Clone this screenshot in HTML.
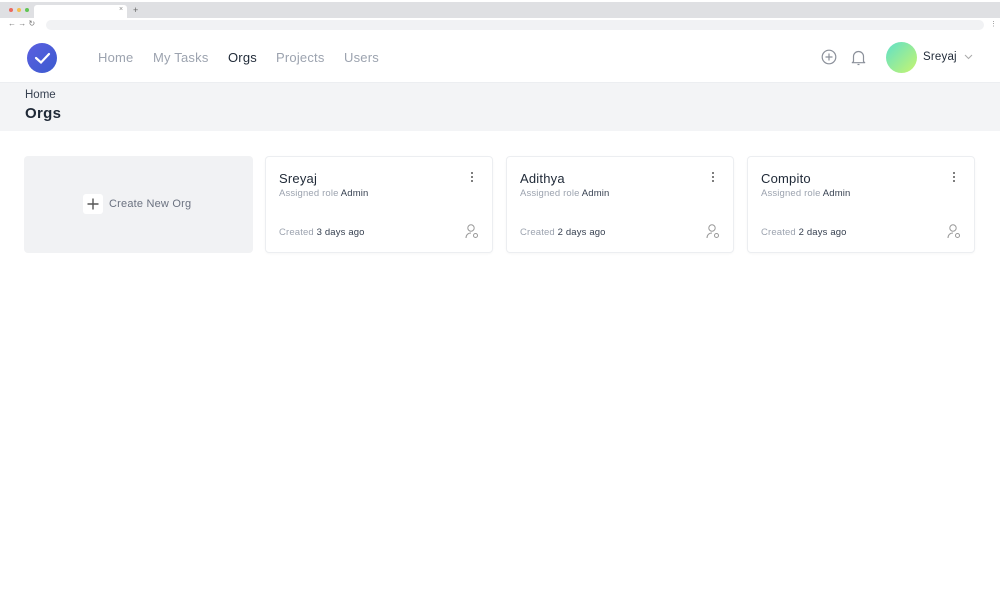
<!DOCTYPE html>
<html><head><style>
*{box-sizing:border-box;margin:0;padding:0}
body{width:1000px;height:610px;background:#fff;font-family:"Liberation Sans",sans-serif;position:relative;overflow:hidden}
.a{position:absolute}
.nav{font-size:13px;color:#9ca3af;top:50px;letter-spacing:.2px}
.card{position:absolute;top:156px;width:228px;height:97px;border:1px solid #eceef1;border-radius:4px;background:#fff;box-shadow:0 1px 2px rgba(0,0,0,.03)}
.card .t{position:absolute;left:13px;top:14px;font-size:13px;color:#1f2937;letter-spacing:.2px}
.card .r{position:absolute;left:13px;top:31px;font-size:9.5px;color:#9ca3af;letter-spacing:.15px}
.card .c{position:absolute;left:13px;top:70px;font-size:9.5px;color:#9ca3af;letter-spacing:.15px}
.card b{font-weight:normal;color:#374151}
.dots{position:absolute;right:18px;top:15px;width:3px}
.dots i{display:block;width:2px;height:2px;background:#555;border-radius:50%;margin-bottom:2px}
.usr{position:absolute;right:13px;top:67px}
</style></head><body>
<div class="a" style="left:0;top:2px;width:1000px;height:16px;background:#dfe0e3"></div>
<div class="a" style="left:9px;top:8px;width:4px;height:4px;border-radius:50%;background:#ec6a5e"></div>
<div class="a" style="left:17px;top:8px;width:4px;height:4px;border-radius:50%;background:#f4bf4f"></div>
<div class="a" style="left:25px;top:8px;width:4px;height:4px;border-radius:50%;background:#61c554"></div>
<div class="a" style="left:34px;top:5px;width:93px;height:13px;background:#fff;border-radius:3px 3px 0 0"></div>
<div class="a" style="left:119px;top:6px;font-size:7px;color:#888">×</div>
<div class="a" style="left:133px;top:5px;font-size:9px;color:#666">+</div>
<div class="a" style="left:0;top:18px;width:1000px;height:14px;background:#fff"></div>
<div class="a" style="left:8px;top:19px;font-size:8px;color:#777">← → ↻</div>
<div class="a" style="left:46px;top:20px;width:938px;height:10px;background:#f1f2f4;border-radius:5px"></div>
<div class="a" style="left:990px;top:20px;font-size:7px;color:#888">⋮</div>

<div class="a" style="left:27px;top:43px;width:30px;height:30px;border-radius:50%;background:linear-gradient(135deg,#5b5fe0,#3b5bcf)"></div>
<svg class="a" style="left:27px;top:43px" width="30" height="30"><path d="M9 15 L14 19.5 L22 11" fill="none" stroke="#fff" stroke-width="2.2" stroke-linecap="round"/></svg>
<div class="a nav" style="left:98px">Home</div>
<div class="a nav" style="left:153px">My Tasks</div>
<div class="a nav" style="left:228px;color:#1f2937">Orgs</div>
<div class="a nav" style="left:276px">Projects</div>
<div class="a nav" style="left:344px">Users</div>
<svg class="a" style="left:821px;top:49px" width="16" height="16"><circle cx="8" cy="8" r="6.8" fill="none" stroke="#8b909a" stroke-width="1.2"/><path d="M8 4.5v7M4.5 8h7" stroke="#8b909a" stroke-width="1.2"/></svg>
<svg class="a" style="left:850px;top:48px" width="17" height="19"><path d="M3.5 13.5V8.5a5 5 0 0 1 10 0v5l1.2 1.2H2.3z" fill="none" stroke="#8b909a" stroke-width="1.2" stroke-linejoin="round"/><path d="M7.5 16.5h2" stroke="#8b909a" stroke-width="1.2"/></svg>
<div class="a" style="left:886px;top:42px;width:31px;height:31px;border-radius:50%;background:linear-gradient(135deg,#5fe0c9,#c8f56e)"></div>
<div class="a" style="left:923px;top:51px;font-size:11.5px;color:#1f2937;letter-spacing:.2px">Sreyaj</div>
<svg class="a" style="left:964px;top:54px" width="9" height="6"><path d="M1 1l3.5 3.5L8 1" fill="none" stroke="#aaa" stroke-width="1"/></svg>

<div class="a" style="left:0;top:82px;width:1000px;height:49px;background:#f3f4f6;border-top:1px solid #eceef1"></div>
<div class="a" style="left:25px;top:89px;font-size:11.5px;color:#374151">Home</div>
<div class="a" style="left:25px;top:105px;font-size:15px;font-weight:bold;color:#1f2937;letter-spacing:.3px">Orgs</div>

<div class="a" style="left:24px;top:156px;width:229px;height:97px;background:#f1f2f4;border-radius:4px"></div>
<div class="a" style="left:83px;top:194px;width:20px;height:20px;background:#fff;border-radius:3px"></div>
<svg class="a" style="left:83px;top:194px" width="20" height="20"><path d="M10 4.5v11M4.5 10h11" stroke="#555" stroke-width="1.4"/></svg>
<div class="a" style="left:109px;top:198px;font-size:11px;color:#6b7280;letter-spacing:.2px">Create New Org</div>

<div class="card" style="left:265px"><div class="t">Sreyaj</div><div class="r">Assigned role <b>Admin</b></div><div class="c">Created <b>3 days ago</b></div><div class="dots"><i></i><i></i><i></i></div><svg class="usr" width="14" height="15"><circle cx="6" cy="4" r="3.2" fill="none" stroke="#999" stroke-width="1"/><path d="M1 14c0-3 2-5 5-5" fill="none" stroke="#999" stroke-width="1"/><circle cx="10.5" cy="11.5" r="2" fill="none" stroke="#999" stroke-width="1"/></svg></div>
<div class="card" style="left:506px"><div class="t">Adithya</div><div class="r">Assigned role <b>Admin</b></div><div class="c">Created <b>2 days ago</b></div><div class="dots"><i></i><i></i><i></i></div><svg class="usr" width="14" height="15"><circle cx="6" cy="4" r="3.2" fill="none" stroke="#999" stroke-width="1"/><path d="M1 14c0-3 2-5 5-5" fill="none" stroke="#999" stroke-width="1"/><circle cx="10.5" cy="11.5" r="2" fill="none" stroke="#999" stroke-width="1"/></svg></div>
<div class="card" style="left:747px"><div class="t">Compito</div><div class="r">Assigned role <b>Admin</b></div><div class="c">Created <b>2 days ago</b></div><div class="dots"><i></i><i></i><i></i></div><svg class="usr" width="14" height="15"><circle cx="6" cy="4" r="3.2" fill="none" stroke="#999" stroke-width="1"/><path d="M1 14c0-3 2-5 5-5" fill="none" stroke="#999" stroke-width="1"/><circle cx="10.5" cy="11.5" r="2" fill="none" stroke="#999" stroke-width="1"/></svg></div>
</body></html>
